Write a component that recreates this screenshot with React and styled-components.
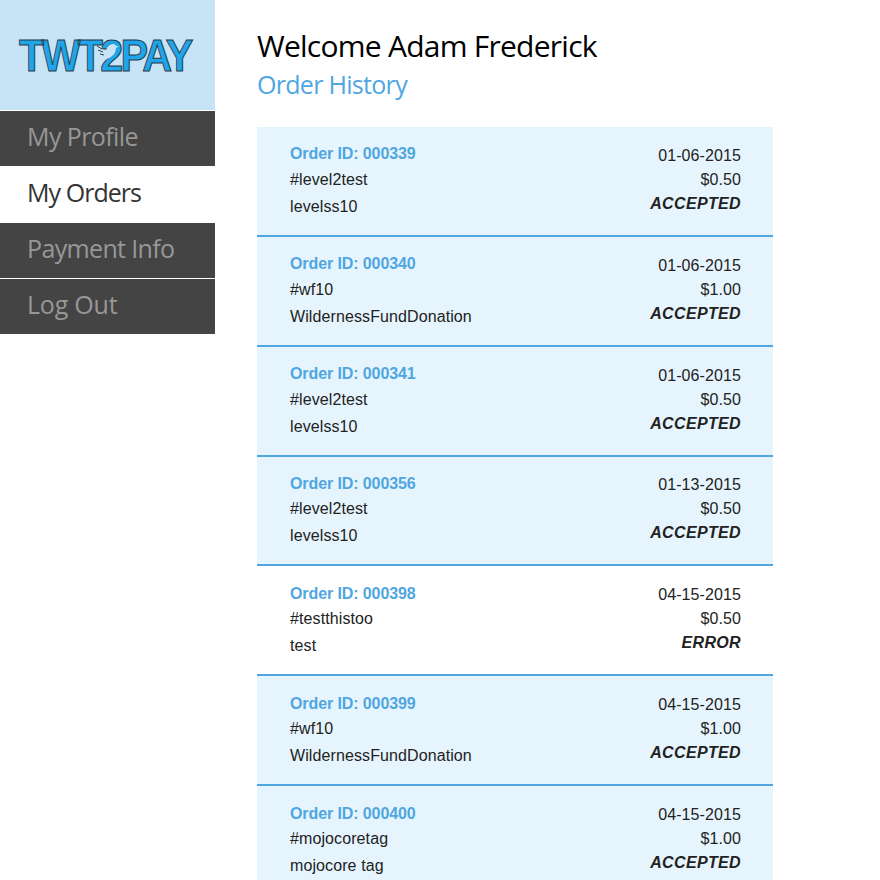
import React from 'react';
import styled, { createGlobalStyle } from 'styled-components';

const GlobalStyle = createGlobalStyle`
  html, body {
    margin: 0;
    padding: 0;
    height: 880px;
    overflow: hidden;
    background: #fff;
  }
`;

const Page = styled.div`
  display: flex;
  height: 880px;
  overflow: hidden;
`;

const Sidebar = styled.nav`
  width: 215px;
  flex-shrink: 0;
`;

const LogoBox = styled.div`
  height: 110px;
  background: #c7e4f6;
  display: flex;
  padding: 35px 0 0 18px;
  box-sizing: border-box;
  margin-bottom: 1px;
`;

const MenuItem = styled.a`
  display: block;
  height: ${(p) => p.$height}px;
  margin-bottom: ${(p) => (p.$gap ? 1 : 0)}px;
  padding-left: 27px;
  background: ${(p) => (p.$active ? '#fff' : '#444444')};
  color: ${(p) => (p.$active ? '#333333' : '#979797')};
  font: 400 25px/${(p) => (p.$active ? 53 : 51)}px 'Open Sans', sans-serif;
  letter-spacing: ${(p) => p.$spacing}px;
`;

const Main = styled.main`
  width: 516px;
  margin-left: 42px;
  padding-top: 26px;
`;

const Title = styled.h1`
  margin: 0;
  font: 400 30px/40px 'Open Sans', sans-serif;
  letter-spacing: -0.75px;
  color: #000;
`;

const Subtitle = styled.h2`
  margin: 0 0 24px;
  font: 400 25px/37px 'Open Sans', sans-serif;
  letter-spacing: -0.7px;
  color: #4fa6e1;
`;

const Row = styled.div`
  display: flex;
  justify-content: space-between;
  height: 109.85px;
  box-sizing: border-box;
  padding: 16px 32px 0 33px;
  background: ${(p) => (p.$plain ? '#fff' : '#e6f5fd')};
  border-bottom: 2px solid #4fa6e1;
  font: 400 16px/27px 'Liberation Sans', sans-serif;
  letter-spacing: 0.1px;
  color: #222;
`;

const Col = styled.div`
  display: flex;
  flex-direction: column;
`;

const RightCol = styled(Col)`
  align-items: flex-end;
  padding-top: 0.9px;
  line-height: 24px;
`;

const OrderId = styled.div`
  font-weight: 700;
  color: #4fa6e1;
  line-height: 21px;
  letter-spacing: -0.1px;
  padding-top: 0.45px;
  margin-bottom: 1.45px;
`;

const Tag = styled.div`
  line-height: 27px;
`;

const Status = styled.div`
  font-weight: 700;
  font-style: italic;
  letter-spacing: 0.35px;
  line-height: 24px;
`;

const orders = [
  ['000339', '#level2test', 'levelss10', '01-06-2015', '$0.50', 'ACCEPTED'],
  ['000340', '#wf10', 'WildernessFundDonation', '01-06-2015', '$1.00', 'ACCEPTED'],
  ['000341', '#level2test', 'levelss10', '01-06-2015', '$0.50', 'ACCEPTED'],
  ['000356', '#level2test', 'levelss10', '01-13-2015', '$0.50', 'ACCEPTED'],
  ['000398', '#testthistoo', 'test', '04-15-2015', '$0.50', 'ERROR'],
  ['000399', '#wf10', 'WildernessFundDonation', '04-15-2015', '$1.00', 'ACCEPTED'],
  ['000400', '#mojocoretag', 'mojocore tag', '04-15-2015', '$1.00', 'ACCEPTED'],
];

function Logo() {
  return (
    <svg width="190" height="42" viewBox="0 0 190 42">
      <text
        transform="translate(1 36) scale(0.92 1)"
        fontFamily="'Liberation Sans', sans-serif"
        fontWeight="700"
        fontSize="45"
        fill="#1fa5ea"
        stroke="#2b3a48"
        strokeWidth="1"
        letterSpacing="-3"
      >
        TWT2PAY
      </text>
      <path
        d="M79 11l5 3 4 2c1-4 3-7 7-7 2 0 3 1 3 2l3 0-3 2c0 5-3 8-7 10l-4 2c1-2 1-3 0-4-4-2-5-5-8-10z"
        fill="#c7e4f6"
      />
      <path d="M79 11l5 3M80 15l5 2M82 19l4 1" stroke="#2b3a48" strokeWidth="1" fill="none" />
    </svg>
  );
}

export default function App() {
  return (
    <Page>
      <GlobalStyle />
      <Sidebar>
        <LogoBox>
          <Logo />
        </LogoBox>
        <MenuItem $height={55} $spacing={-0.6}>My Profile</MenuItem>
        <MenuItem $height={57} $spacing={-0.95} $active>My Orders</MenuItem>
        <MenuItem $height={55} $spacing={-0.65} $gap>Payment Info</MenuItem>
        <MenuItem $height={55} $spacing={-0.2}>Log Out</MenuItem>
      </Sidebar>
      <Main>
        <Title>Welcome Adam Frederick</Title>
        <Subtitle>Order History</Subtitle>
        {orders.map(([id, tag, name, date, amount, status]) => (
          <Row key={id} $plain={status === 'ERROR'}>
            <Col>
              <OrderId>Order ID: {id}</OrderId>
              <Tag>{tag}</Tag>
              <Tag>{name}</Tag>
            </Col>
            <RightCol>
              <div>{date}</div>
              <div>{amount}</div>
              <Status>{status}</Status>
            </RightCol>
          </Row>
        ))}
      </Main>
    </Page>
  );
}
